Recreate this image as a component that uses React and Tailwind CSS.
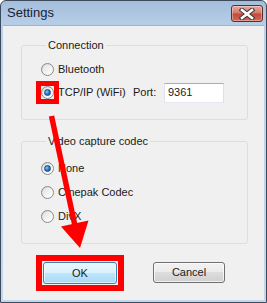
const FONT = { fontFamily: '"Liberation Sans", Arial, sans-serif' }

function Radio({ checked, marked }) {
  return (
    <span className="relative flex h-[13px] w-[13px] shrink-0 items-center justify-center rounded-full border border-[#8a8a8a] bg-[linear-gradient(135deg,#cfcfcf,#f6f6f6_60%,#ffffff)]">
      <span className="flex h-[9px] w-[9px] items-center justify-center rounded-full bg-[linear-gradient(135deg,#e4e4e4,#fdfdfd)]">
        {checked && (
          <span className="h-[7px] w-[7px] rounded-full border border-[#18487e] bg-[radial-gradient(circle_at_35%_35%,#8fcfff,#2f7fcc_45%,#0f4886)]" />
        )}
      </span>
      {marked && <span className="pointer-events-none absolute -inset-[6px] border-[5px] border-[#ff0000]" />}
    </span>
  )
}

function Option({ label, checked, marked, className = 'h-[24px]' }) {
  return (
    <div className={`flex items-center gap-[4px] ${className}`}>
      <Radio checked={checked} marked={marked} />
      <span>{label}</span>
    </div>
  )
}

function Group({ title, children, className }) {
  return (
    <fieldset className={`rounded-[3px] border border-[#d5dfe5] ${className}`}>
      <legend className="ml-[5px] px-[2px] leading-[16px]">{title}</legend>
      {children}
    </fieldset>
  )
}

export default function App() {
  return (
    <div
      className="relative flex h-[303px] w-[267px] flex-col overflow-hidden rounded-t-[6px] border border-[#3d4a5c] bg-[linear-gradient(#a3bedc,#bcd2ea_30px,#c2d7ec)] text-[11px] text-[#1a1a1a]"
      style={FONT}
    >
      {/* Title bar */}
      <div className="flex h-[24px] shrink-0 items-center justify-between pl-[6px] pr-[3px]">
        <span className="text-[13px] text-[#1b1b33]">Settings</span>
        <button className="mt-[1px] flex h-[17px] w-[32px] items-center justify-center rounded-[3px] border border-[#5e2f2a] bg-[linear-gradient(#e9a99b,#d47a6b_45%,#c4493a_55%,#d36a55)] shadow-[inset_0_0_0_1px_rgba(255,255,255,0.35)]">
          <svg width="16" height="12" viewBox="0 0 16 12">
            <path d="M3 2 L13 10 M13 2 L3 10" stroke="#3b3b3b" strokeWidth="4.6" strokeLinecap="square" />
            <path d="M3 2 L13 10 M13 2 L3 10" stroke="#ffffff" strokeWidth="2.6" strokeLinecap="square" />
          </svg>
        </button>
      </div>

      {/* Client area */}
      <div className="mx-[2px] mb-[2px] flex flex-1 flex-col border-t border-[#9db3cb] bg-[#f0f0f0] pl-[18px] pr-[16px]">
        <Group title="Connection" className="mt-[11px] h-[83px] pl-[19px] pt-[5px]">
          <Option label="Bluetooth" className="h-[23px]" />
          <div className="flex h-[23px] items-center">
            <div className="flex w-[92px] items-center gap-[4px]">
              <Radio checked marked />
              <span>TCP/IP (WiFi)</span>
            </div>
            <span className="w-[31px]">Port:</span>
            <div className="flex h-[20px] w-[60px] items-center border border-[#abadb3] border-b-[#e3e9ef] border-l-[#e2e3ea] border-r-[#dbdfe6] bg-white pl-[3px]">
              9361
            </div>
          </div>
        </Group>

        <Group title="Video capture codec" className="mt-[13px] h-[111px] pl-[19px] pt-[7px]">
          <Option label="None" checked />
          <Option label="Cinepak Codec" />
          <Option label="DivX" />
        </Group>

        <div className="mt-[18px] flex gap-[36px] pl-[22px]">
          <button className="relative h-[22px] w-[74px] rounded-[3px] border border-[#3c7fb1] bg-[linear-gradient(#eaf6fd,#d9f0fc_50%,#bee6fd_50%,#a7d9f5)] shadow-[inset_0_0_0_1px_rgba(255,255,255,0.6)]">
            OK
            <span className="pointer-events-none absolute -inset-[8px] border-[6px] border-[#ff0000]" />
          </button>
          <button className="h-[21px] w-[72px] rounded-[3px] border border-[#707070] bg-[linear-gradient(#f2f2f2,#ebebeb_50%,#dddddd_50%,#cfcfcf)] shadow-[inset_0_0_0_1px_rgba(255,255,255,0.7)]">
            Cancel
          </button>
        </div>
      </div>

      {/* Annotation arrow */}
      <svg className="pointer-events-none absolute -left-px -top-px" width="267" height="303" viewBox="0 0 267 303">
        <line x1="51.5" y1="116" x2="75" y2="226" stroke="#ff0000" strokeWidth="5.5" />
        <polygon points="80,248 88.5,220.5 61,226.5" fill="#ff0000" />
      </svg>
    </div>
  )
}
